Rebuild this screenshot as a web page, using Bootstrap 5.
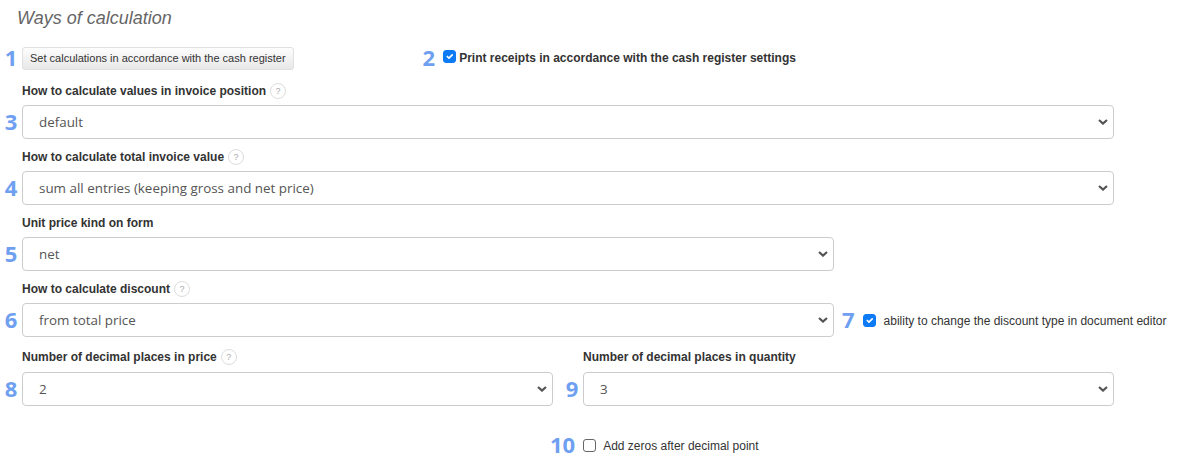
<!DOCTYPE html>
<html lang="en">
<head>
  <meta charset="UTF-8" />
  <meta name="viewport" content="width=device-width, initial-scale=1.0" />
  <title>Ways of calculation</title>
  <link href="https://cdn.jsdelivr.net/npm/bootstrap@5.3.0/dist/css/bootstrap.min.css" rel="stylesheet">
  <style>
    body { background: #fff; color: #333; font-family: "Liberation Sans", Arial, sans-serif; font-size: 12px; }
    .calc-page { width: 1191px; height: 462px; padding-top: 8px; overflow: hidden; }
    .calc-title { font-size: 18px; font-style: italic; font-weight: 400; color: #666; margin: 0 0 18px 17px; line-height: 20px; }
    .num { width: 22px; flex: none; font-family: "Open Sans", sans-serif; font-weight: 700; font-size: 22px; line-height: 24px; color: #6f9ff0; text-align: center; padding-bottom: 3px; }
    .num-inline { width: auto; }
    .calc-row { display: flex; align-items: center; }
    .top-row { height: 24px; margin-bottom: 13px; }
    .calc-btn { font-size: 11px; line-height: 13px; height: 23px; padding: 3px 7px; color: #333; background: linear-gradient(#fdfdfd, #e8e8e8); border: 1px solid #e0e0e0; border-radius: 3px; white-space: nowrap; }
    .calc-label { font-size: 12px; font-weight: 700; line-height: 16px; color: #333; margin: 0 0 6px 22px; display: flex; align-items: center; gap: 4px; height: 16px; }
    .calc-select.form-select { height: 34px; font-family: "Open Sans", sans-serif; font-size: 13.4px; color: #555; padding: 1px 30px 0 16px; border: 1px solid #ccc; border-radius: 4px; background-image: url("data:image/svg+xml,%3csvg xmlns='http://www.w3.org/2000/svg' viewBox='0 0 10 6'%3e%3cpath fill='none' stroke='%23555' stroke-width='2.2' d='M1 1l4 3.6L9 1'/%3e%3c/svg%3e"); background-position: right 5px center; background-size: 10px 6px; }
    .wide { width: 1092px; }
    .mid { width: 812px; }
    .half { width: 531px; }
    .field { margin-bottom: 10px; }
    .decimal-row { margin-top: 12px; }
    .decimal-row .calc-label { margin-bottom: 7px; }
    .decimal-right { margin-left: 8px; }
    .hint { width: 16px; height: 16px; border: 1px solid #ddd; border-radius: 50%; color: #aaa; font-size: 9px; font-weight: 400; line-height: 14px; text-align: center; flex: none; }
    .calc-check.form-check-input { width: 13px; height: 13px; margin-top: 0; flex: none; border-radius: 3px; border-color: #666; }
    .calc-check.form-check-input:checked { background-color: #0d7bf5; border-color: #0d7bf5; }
    .check-text { font-size: 12px; color: #333; margin: 0; }
    .check-nudge { padding-top: 1px; }
    .gap-print { margin-left: 129px; }
    .print-check { margin-left: 8px; margin-bottom: 3px; }
    .print-text { margin-left: 3px; }
    .zero-row { margin: 26px 0 0 550px; }
    .zero-text { margin-left: 7px; }
  </style>
</head>
<body>
<div class="calc-page">
  <h2 class="calc-title">Ways of calculation</h2>

  <div class="calc-row top-row">
    <span class="num">1</span>
    <button type="button" class="calc-btn">Set calculations in accordance with the cash register</button>
    <span class="num num-inline gap-print">2</span>
    <input class="form-check-input calc-check print-check" type="checkbox" checked>
    <label class="check-text fw-bold print-text">Print receipts in accordance with the cash register settings</label>
  </div>

  <div class="field">
    <div class="calc-label">How to calculate values in invoice position <span class="hint">?</span></div>
    <div class="calc-row">
      <span class="num">3</span>
      <select class="form-select calc-select wide"><option>default</option></select>
    </div>
  </div>

  <div class="field">
    <div class="calc-label">How to calculate total invoice value <span class="hint">?</span></div>
    <div class="calc-row">
      <span class="num">4</span>
      <select class="form-select calc-select wide"><option>sum all entries (keeping gross and net price)</option></select>
    </div>
  </div>

  <div class="field">
    <div class="calc-label">Unit price kind on form</div>
    <div class="calc-row">
      <span class="num">5</span>
      <select class="form-select calc-select mid"><option>net</option></select>
    </div>
  </div>

  <div class="field">
    <div class="calc-label">How to calculate discount <span class="hint">?</span></div>
    <div class="calc-row">
      <span class="num">6</span>
      <select class="form-select calc-select mid"><option>from total price</option></select>
      <span class="num num-inline ms-2">7</span>
      <input class="form-check-input calc-check ms-2" type="checkbox" checked>
      <label class="check-text check-nudge ms-2">ability to change the discount type in document editor</label>
    </div>
  </div>

  <div class="calc-row align-items-start decimal-row">
    <div>
      <div class="calc-label">Number of decimal places in price <span class="hint">?</span></div>
      <div class="calc-row">
        <span class="num">8</span>
        <select class="form-select calc-select half"><option>2</option></select>
      </div>
    </div>
    <div class="decimal-right">
      <div class="calc-label">Number of decimal places in quantity</div>
      <div class="calc-row">
        <span class="num">9</span>
        <select class="form-select calc-select half"><option>3</option></select>
      </div>
    </div>
  </div>

  <div class="calc-row zero-row">
    <span class="num num-inline">10</span>
    <input class="form-check-input calc-check ms-2" type="checkbox">
    <label class="check-text check-nudge zero-text">Add zeros after decimal point</label>
  </div>
</div>
<script src="https://cdn.jsdelivr.net/npm/bootstrap@5.3.0/dist/js/bootstrap.bundle.min.js"></script>
</body>
</html>
